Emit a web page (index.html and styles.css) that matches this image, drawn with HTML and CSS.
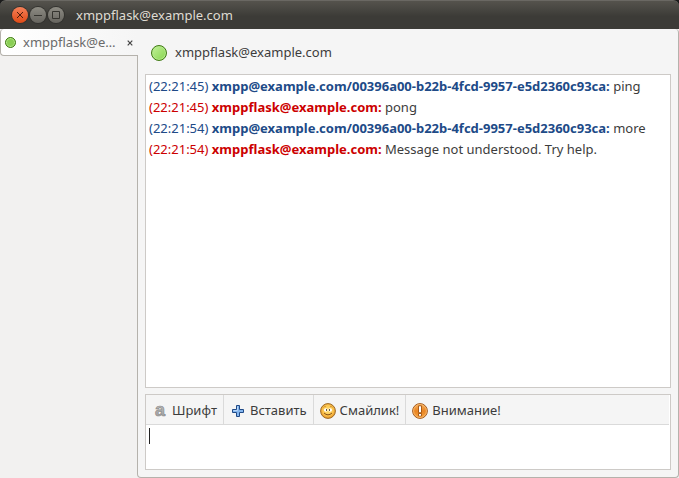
FILE: index.html
```html
<!DOCTYPE html>
<html lang="ru">
<head>
<meta charset="utf-8">
<title>xmppflask@example.com</title>
<link rel="stylesheet" href="styles.css">
</head>
<body>
<div class="window">
  <header class="titlebar">
    <div class="controls">
      <button class="control close" type="button" aria-label="Закрыть"><svg viewBox="0 0 16 16"><path d="M5 5l6 6M11 5l-6 6"/></svg></button>
      <button class="control" type="button" aria-label="Свернуть"><svg viewBox="0 0 16 16"><path d="M4 8.500h8"/></svg></button>
      <button class="control" type="button" aria-label="Развернуть"><svg viewBox="0 0 16 16"><path d="M4.500 4.500h7v7h-7z"/></svg></button>
    </div>
    <h1 class="title">xmppflask@example.com</h1>
  </header>
  <div class="content">
    <aside class="sidebar">
      <div class="tab">
        <span class="status small"></span>
        <span class="tab-name">xmppflask@e…</span>
        <button class="tab-close" type="button" aria-label="Закрыть вкладку"><svg viewBox="0 0 6 6"><path d="M.7 .7l4.600 4.600M5.300 .7L.7 5.300"/></svg></button>
      </div>
    </aside>
    <main class="chat">
      <div class="contact"><span class="status"></span><span>xmppflask@example.com</span></div>
      <section class="log">
        <p class="sent"><time>(22:21:45)</time> <b>xmpp@example.com/00396a00-b22b-4fcd-9957-e5d2360c93ca:</b> <span>ping</span></p>
        <p class="received"><time>(22:21:45)</time> <b>xmppflask@example.com:</b> <span>pong</span></p>
        <p class="sent"><time>(22:21:54)</time> <b>xmpp@example.com/00396a00-b22b-4fcd-9957-e5d2360c93ca:</b> <span>more</span></p>
        <p class="received"><time>(22:21:54)</time> <b>xmppflask@example.com:</b> <span>Message not understood. Try help.</span></p>
      </section>
      <section class="composer">
        <div class="toolbar">
          <button class="tool" type="button">
            <svg class="icon" viewBox="0 0 16 16" aria-hidden="true"><defs><linearGradient id="grey" x2="0" y2="1"><stop offset="0" stop-color="#c8c8c8"/><stop offset="1" stop-color="#9a9a9a"/></linearGradient></defs><text class="glyph" x="8" y="13" text-anchor="middle">a</text></svg>
            Шрифт</button>
          <button class="tool" type="button">
            <svg class="icon" viewBox="0 0 16 16"><path d="M6.500 2.500h3v4h4v3h-4v4h-3v-4h-4v-3h4z" fill="#83b5ee" stroke="#204a87"/><path d="M7.500 3.500v4h-4" fill="none" stroke="#b7d6f8"/></svg>
            Вставить</button>
          <button class="tool" type="button">
            <svg class="icon" viewBox="0 0 16 16"><defs><radialGradient id="gold" cy=".45"><stop offset="0" stop-color="#ffe178"/><stop offset=".7" stop-color="#fbc44f"/><stop offset="1" stop-color="#eda02f"/></radialGradient></defs><circle cx="8" cy="8" r="7.400" fill="url(#gold)" stroke="#9c6a26"/><path d="M3.500 4.500Q4.500 3 6 3.700M10 3.700Q11.500 3 12.500 4.500" fill="none" stroke="#c88828" stroke-width=".8"/><ellipse cx="5.800" cy="7" rx="1.900" ry="1.700" fill="#fff"/><ellipse cx="10.200" cy="7" rx="1.900" ry="1.700" fill="#fff"/><path d="M6.500 6.200v1.600M9.500 6.200v1.600" stroke="#3b2c1a"/><path d="M4 10Q8 13.700 12 10" fill="none" stroke="#8a5214"/></svg>
            Смайлик!</button>
          <button class="tool" type="button">
            <svg class="icon" viewBox="0 0 16 16"><defs><linearGradient id="orange" x2="0" y2="1"><stop offset="0" stop-color="#f9b15b"/><stop offset=".5" stop-color="#e98523"/><stop offset="1" stop-color="#f6a13c"/></linearGradient></defs><circle cx="8" cy="8" r="7.400" fill="url(#orange)" stroke="#a35c22"/><circle cx="8" cy="8" r="6.400" fill="none" stroke="#fcc078" stroke-width=".8"/><path d="M8 2.500v7.300M8 10.300v3" stroke="#8f450b" stroke-width="3.400"/><path d="M8 3.200v6M8 11v1.700" stroke="#fff" stroke-width="2"/></svg>
            Внимание!</button>
        </div>
        <textarea class="message" aria-label="Сообщение"></textarea>
      </section>
    </main>
  </div>
</div>
</body>
</html>
```
FILE: styles.css
```css
* { box-sizing: border-box; }

body {
  margin: 0;
  background: #1b1b1b;
  color: #3c3c3c;
  font: 13px/21px "Noto Sans", "Open Sans", sans-serif;
}

button { font: inherit; color: inherit; border: 0; padding: 0; background: none; }
svg { display: block; }

.window {
  display: flex;
  flex-direction: column;
  height: 100vh;
}

.titlebar {
  display: flex;
  align-items: center;
  gap: 12px;
  height: 29px;
  padding: 0 12px;
  border-top: 1px solid #6a6863;
  border-radius: 6px 6px 0 0;
  background: linear-gradient(#55534d, #3c3b37 55%, #3c3b37);
}

.controls { display: flex; gap: 2px; }

.control {
  width: 16px;
  height: 16px;
  border-radius: 50%;
  background: linear-gradient(#8d8b83, #66645e);
  box-shadow: 0 0 0 1px #33322e;
}

.control path { fill: none; stroke: #35342f; }
.close { background: linear-gradient(#f58058, #df4a16); }
.close path { stroke: #4d1d0c; }

.title {
  margin: 0;
  color: #dfdbd2;
  font-size: 13px;
  font-weight: 400;
}

.content {
  display: flex;
  flex: 1;
  min-height: 0;
  background: #f2f1f0;
}

.sidebar { width: 137px; }

.tab {
  position: relative;
  display: flex;
  align-items: center;
  height: 27px;
  padding: 0 4px;
  border: solid #b5b2ac;
  border-width: 0 0 1px 1px;
  border-radius: 4px 0 0 4px;
  background: linear-gradient(90deg, #fff, #f5f5f5);
  color: #6a6a6a;
}

/* Opens the selected tab into the chat pane. */
.tab::after {
  position: absolute;
  inset: 0 -1px 0 auto;
  width: 1px;
  background: #f5f5f5;
  content: "";
}

.tab-name {
  flex: 1;
  margin-left: 7px;
  white-space: nowrap;
}

.tab-close { width: 6px; margin-top: 2px; }
.tab-close path { stroke: #444; stroke-width: 1.2; }

.status {
  width: 16px;
  height: 16px;
  border: 1px solid #3f7a12;
  border-radius: 50%;
  background: linear-gradient(135deg, #c3f19a, #86d54e);
  box-shadow: inset 0 0 0 1px #b5e98c;
}

.small {
  width: 11px;
  height: 11px;
  background: #8ace55;
}

.chat {
  display: flex;
  flex: 1;
  flex-direction: column;
  min-width: 0;
  padding: 0 7px 7px;
  border: solid #b5b2ac;
  border-width: 0 1px 1px;
  border-radius: 0 4px 4px 4px;
  background: #f5f5f5;
}

.contact {
  display: flex;
  align-items: center;
  gap: 8px;
  height: 45px;
  padding: 2px 6px 0;
}

.log {
  flex: 1;
  min-height: 0;
  padding: 1px 3px;
  border: 1px solid #cdcac7;
  background: #fff;
  overflow: hidden;
}

.log p { margin: 0; }
.log span { color: #3c3c3c; }
.sent { color: #204a87; }
.received { color: #c00; }

.composer {
  display: flex;
  flex-direction: column;
  margin-top: 6px;
  border: 1px solid #cdcac7;
  background: #fff;
}

.toolbar {
  display: flex;
  height: 30px;
  margin-right: 1px;
  border-bottom: 1px solid #dadada;
  background: #f5f5f5;
}

.tool {
  display: flex;
  align-items: center;
  gap: 4px;
  padding: 2px 6px 0;
  border-right: 1px solid #dadada;
}

.tool:last-child { border: 0; }
.icon { width: 16px; height: 16px; overflow: visible; }

.glyph {
  fill: url(#grey);
  stroke: #8c8c8c;
  stroke-width: 0.7;
  font: 700 18px "Liberation Sans", sans-serif;
}

.message {
  height: 44px;
  padding: 3px;
  border: 0;
  outline: 0;
  resize: none;
  background: linear-gradient(#222, #222) 3px 3px / 1px 16px no-repeat;
  font: inherit;
}
```
